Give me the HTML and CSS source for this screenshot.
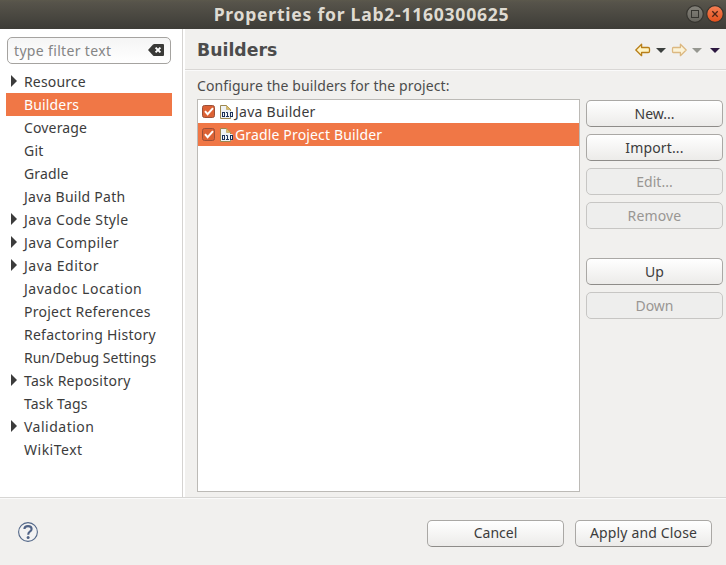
FILE: index.html
```html
<!DOCTYPE html>
<html lang="en">
<head>
<meta charset="utf-8">
<title>Properties for Lab2-1160300625</title>
<link rel="stylesheet" href="styles.css">
</head>
<body>
<div class="window">
  <header class="titlebar">
    <h1 class="title">Properties for Lab2-1160300625</h1>
    <div class="controls">
      <svg width="18" height="18" viewBox="0 0 18 18"><defs><linearGradient id="g" x2="0" y2="1"><stop stop-color="#85837b"/><stop offset="1" stop-color="#65635c"/></linearGradient></defs><circle cx="9" cy="9" r="8.3" fill="url(#g)" stroke="#35342f" stroke-width="1.2"/><rect x="5.5" y="5.5" width="7" height="7" fill="none" stroke="#35342f"/></svg>
      <svg width="18" height="18" viewBox="0 0 18 18"><defs><linearGradient id="r" x2="0" y2="1"><stop stop-color="#f58055"/><stop offset="1" stop-color="#e2501c"/></linearGradient></defs><circle cx="9" cy="9" r="8.3" fill="url(#r)" stroke="#35342f" stroke-width="1.2"/><path d="M6.3 6.3l5.4 5.4M11.7 6.3l-5.4 5.4" stroke="#4b2416" stroke-width="1.3"/></svg>
    </div>
  </header>
  <div class="main">
    <nav class="sidebar">
      <div class="filter"><span>type filter text</span>
        <svg width="16" height="12" viewBox="0 0 16 12"><path d="M0 6L5 .6Q5.6 0 6.4 0H15Q16 0 16 1V11Q16 12 15 12H6.4Q5.6 12 5 11.4Z" fill="#3a3a38"/><path d="M7.6 3.6l4.8 4.8M12.4 3.6L7.6 8.4" stroke="#fff" stroke-width="2"/></svg>
      </div>
      <ul class="tree">
        <li class="parent track-s">Resource</li>
        <li class="selected track-s">Builders</li>
        <li class="track-s">Coverage</li>
        <li class="track-m">Git</li>
        <li class="track-s">Gradle</li>
        <li class="track-m">Java Build Path</li>
        <li class="parent track-l">Java Code Style</li>
        <li class="parent track-l">Java Compiler</li>
        <li class="parent track-xl">Java Editor</li>
        <li class="track-xl">Javadoc Location</li>
        <li class="track-m">Project References</li>
        <li class="track-m">Refactoring History</li>
        <li>Run/Debug Settings</li>
        <li class="parent track-m">Task Repository</li>
        <li class="track-s">Task Tags</li>
        <li class="parent track-xl">Validation</li>
        <li class="track-xl">WikiText</li>
      </ul>
    </nav>
    <section class="page">
      <div class="page-head">
        <h2>Builders</h2>
        <svg class="nav" width="86" height="14" viewBox="0 0 86 14">
          <path d="M.8 7L6.6 1.3V4.5H13.2Q14.5 4.5 14.5 5.7V8.3Q14.5 9.5 13.2 9.5H6.6V12.7Z" fill="#fff4c4" stroke="#b87f18" stroke-width="1.3" stroke-linejoin="round"/>
          <path d="M21 5h10l-5 5z" fill="#3c403e"/>
          <path d="M51.2 7L45.4 1.3V4.5H38.2Q37.5 4.5 37.5 5.7V8.3Q37.5 9.5 38.2 9.5H45.4V12.7Z" fill="#fbf3d8" stroke="#dcb880" stroke-width="1.3" stroke-linejoin="round"/>
          <path d="M57 5h10l-5 5z" fill="#969790"/>
          <path d="M75 5h10l-5 5z" fill="#2c1840"/>
        </svg>
      </div>
      <div class="page-body">
        <p class="caption">Configure the builders for the project:</p>
        <div class="columns">
          <ul class="list">
            <li><svg class="check" width="13" height="13" viewBox="0 0 13 13"><rect x=".5" y=".5" width="12" height="12" rx="2" fill="#dc6235" stroke="#9b5039"/><path d="M3 6.2l2.6 3L11 3.2" fill="none" stroke="#fff" stroke-width="2"/></svg><svg class="doc" width="15" height="15" viewBox="0 0 15 15"><path d="M1.5 1.5H7.5L11.5 5.5V14.5H1.5Z" fill="#eef2f4" stroke="#9c8750"/><path d="M7.5 1.5V5.5H11.5Z" fill="#d9bb68" stroke="#b79a50" stroke-width=".6"/><path d="M2 7H13.5V13.2H2Z" fill="#eef2f4"/><g fill="none" stroke="#1c3159"><rect x="3.5" y="8.5" width="2" height="4"/><path d="M7 8.5H8.5V12.5M7 12.5H10"/><rect x="11.5" y="8.5" width="2" height="4"/></g></svg><span class="track-m">Java Builder</span></li>
            <li class="selected"><svg class="check" width="13" height="13" viewBox="0 0 13 13"><rect x=".5" y=".5" width="12" height="12" rx="2" fill="#dc6235" stroke="#9b5039"/><path d="M3 6.2l2.6 3L11 3.2" fill="none" stroke="#fff" stroke-width="2"/></svg><svg class="doc" width="15" height="15" viewBox="0 0 15 15"><path d="M1.5 1.5H7.5L11.5 5.5V14.5H1.5Z" fill="#eef2f4" stroke="#9c8750"/><path d="M7.5 1.5V5.5H11.5Z" fill="#d9bb68" stroke="#b79a50" stroke-width=".6"/><path d="M2 7H13.5V13.2H2Z" fill="#eef2f4"/><g fill="none" stroke="#1c3159"><rect x="3.5" y="8.5" width="2" height="4"/><path d="M7 8.5H8.5V12.5M7 12.5H10"/><rect x="11.5" y="8.5" width="2" height="4"/></g></svg><span class="track-s">Gradle Project Builder</span></li>
          </ul>
          <div class="actions">
            <button>New...</button>
            <button class="track-s">Import...</button>
            <button disabled>Edit...</button>
            <button class="track-s" disabled>Remove</button>
            <button class="group">Up</button>
            <button disabled>Down</button>
          </div>
        </div>
      </div>
    </section>
  </div>
  <footer class="footer">
    <svg class="help" width="20" height="20" viewBox="0 0 20 20"><circle cx="10" cy="10" r="9.4" fill="#f2f2f2" stroke="#526788" stroke-width="1.1"/><path d="M6.4 7Q6.5 4.1 10 4.1Q13.6 4.1 13.6 7Q13.6 8.5 11.8 9.6Q10.2 10.6 10.2 12.7" fill="none" stroke="#506386" stroke-width="2.1"/><circle cx="10.1" cy="15.5" r="1.5" fill="#506386"/></svg>
    <div class="footer-buttons"><button>Cancel</button><button class="track-s">Apply and Close</button></div>
  </footer>
</div>
</body>
</html>
```
FILE: styles.css
```css
* { box-sizing: border-box; margin: 0; padding: 0; }
body {
  font: 14px "Noto Sans", sans-serif;
  color: #3c3c3c;
  background: #f1f0ee;
}
svg { display: block; flex: none; }
ul { list-style: none; }
.window { width: 726px; height: 565px; display: flex; flex-direction: column; overflow: hidden; }
.titlebar {
  height: 29px;
  flex: none;
  position: relative;
  display: flex;
  justify-content: center;
  align-items: center;
  background: linear-gradient(#5b584c, #56534a 10%, #3d3c37);
}
.title {
  font-size: 17.6px;
  font-weight: 700;
  line-height: 28px;
  letter-spacing: .73px;
  color: #dfdbd2;
  margin-right: 3px;
  padding-bottom: 1px;
  white-space: nowrap;
}
.controls { position: absolute; top: 5px; right: 2px; display: flex; gap: 2px; }
.main { height: 468px; display: flex; flex: none; }
.sidebar {
  width: 183px;
  flex: none;
  background: #fff;
  border-right: 1px solid #d5d3d1;
  padding-top: 8px;
}
.filter {
  width: 164px;
  height: 27px;
  margin-left: 7px;
  padding: 0 6px 1px 6px;
  display: flex;
  align-items: center;
  justify-content: space-between;
  border: 1px solid #a5a3a0;
  border-radius: 5px;
  background: linear-gradient(#f5f5f5, #fff);
  color: #858585;
  letter-spacing: .34px;
}
.tree { margin: 6px 10px 0 6px; }
.tree li { height: 23px; line-height: 23px; padding-left: 18px; white-space: nowrap; position: relative; }
.tree .parent::before {
  content: "";
  position: absolute;
  left: 5px;
  top: 5px;
  border-left: 6px solid #3c3c3c;
  border-top: 6px solid transparent;
  border-bottom: 6px solid transparent;
}
.track-s { letter-spacing: .15px; }
.track-m { letter-spacing: .26px; }
.track-l { letter-spacing: .36px; }
.track-xl { letter-spacing: .5px; }
.tree .selected, .list .selected { background: #f07746; color: #fff; }
.page { flex: 1; border-left: 2px solid #fff; }
.page-head {
  height: 42px;
  padding: 0 5px 0 12px;
  display: flex;
  align-items: center;
  justify-content: space-between;
  border-bottom: 1px solid #fafafa;
  box-shadow: inset 0 -1px #d9d7d5;
}
.page-head h2 { font: 700 17.3px/40px "DejaVu Sans", sans-serif; color: #4c4c4c; }
.page-body { padding: 5px 3px 0 12px; }
.caption { line-height: 20px; height: 23px; letter-spacing: .1px; white-space: nowrap; color: #4c4c4c; }
.columns { display: flex; gap: 6px; }
.list { width: 383px; height: 393px; background: #fff; border: 1px solid #bcbab6; }
.list li { height: 23px; line-height: 23px; display: flex; padding-left: 4px; }
.check { margin-top: 5px; }
.doc { margin: 4px 2px 0 4px; }
.list span { margin-left: -1px; }
.actions { display: flex; flex-direction: column; gap: 7px; padding-top: 1px; }
button {
  width: 137px;
  height: 27px;
  font: inherit;
  line-height: 24px;
  color: #3c3c3c;
  border: 1px solid #aaa8a5;
  border-bottom-color: #8e8c89;
  border-radius: 5px;
  background: linear-gradient(#fff, #ecebe9);
}
button:disabled { color: #999693; background: #eeeeed; border-color: #c7c6c4; }
.group { margin-top: 22px; }
.footer {
  flex: 1;
  display: flex;
  align-items: center;
  justify-content: space-between;
  border-top: 1px solid #d7d6d4;
  box-shadow: inset 0 1px #fafafa;
  padding: 3px 14px 0 18px;
}
.help { margin-bottom: 2px; }
.footer-buttons { display: flex; gap: 11px; }
```
